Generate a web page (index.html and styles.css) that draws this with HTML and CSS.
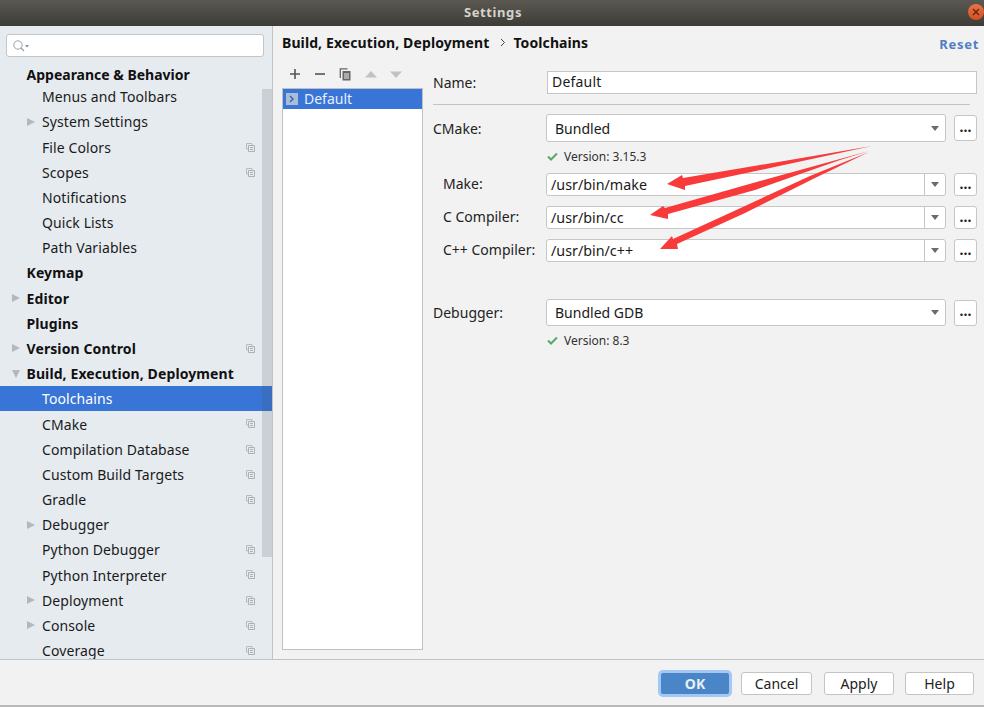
FILE: index.html
```html
<!DOCTYPE html>
<html lang="en">
<head>
    <meta charset="UTF-8">
    <title>Settings</title>
    <link rel="stylesheet" href="styles.css">
</head>
<body>
    <svg class="defs" width="0" height="0">
        <symbol id="i-copy" viewBox="0 0 9 9">
            <path d="M.5.5h5.5v1.5M.5.5v5.5h2" fill="none" stroke="#b4bcc2"/>
            <path d="M2.5 2.5h6v6h-6zM4 4.5h3M4 6.5h3" fill="none" stroke="#a8b2b9"/>
        </symbol>
    </svg>

    <div class="window">
        <header class="titlebar">
            <span class="title">Settings</span>
            <span class="close">
                <svg width="8" height="8" viewBox="0 0 8 8"><path d="M1 1l6 6M7 1l-6 6" stroke="#5a2410" stroke-width="1.2"/></svg>
            </span>
        </header>

        <div class="main">
            <aside class="sidebar">
                <div class="search">
                    <svg width="18" height="14" viewBox="0 0 18 14">
                        <circle cx="6" cy="6" r="4.2" fill="none" stroke="#9aa0a4"/>
                        <path d="M9 9l3 3" stroke="#9aa0a4" stroke-width="1.2"/>
                        <path d="M13 6h4l-2 2.5z" fill="#8a8f93"/>
                    </svg>
                </div>
                <ul class="tree">
                    <li class="row top first">Appearance &amp; Behavior</li>
                    <li class="row sub">Menus and Toolbars</li>
                    <li class="row sub arrow">System Settings</li>
                    <li class="row sub">File Colors<svg class="copy"><use href="#i-copy"/></svg></li>
                    <li class="row sub">Scopes<svg class="copy"><use href="#i-copy"/></svg></li>
                    <li class="row sub">Notifications</li>
                    <li class="row sub">Quick Lists</li>
                    <li class="row sub">Path Variables</li>
                    <li class="row top">Keymap</li>
                    <li class="row top arrow">Editor</li>
                    <li class="row top">Plugins</li>
                    <li class="row top arrow">Version Control<svg class="copy"><use href="#i-copy"/></svg></li>
                    <li class="row top arrow open">Build, Execution, Deployment</li>
                    <li class="row sub selected">Toolchains</li>
                    <li class="row sub">CMake<svg class="copy"><use href="#i-copy"/></svg></li>
                    <li class="row sub">Compilation Database<svg class="copy"><use href="#i-copy"/></svg></li>
                    <li class="row sub">Custom Build Targets<svg class="copy"><use href="#i-copy"/></svg></li>
                    <li class="row sub">Gradle<svg class="copy"><use href="#i-copy"/></svg></li>
                    <li class="row sub arrow">Debugger</li>
                    <li class="row sub">Python Debugger<svg class="copy"><use href="#i-copy"/></svg></li>
                    <li class="row sub">Python Interpreter<svg class="copy"><use href="#i-copy"/></svg></li>
                    <li class="row sub arrow">Deployment<svg class="copy"><use href="#i-copy"/></svg></li>
                    <li class="row sub arrow">Console<svg class="copy"><use href="#i-copy"/></svg></li>
                    <li class="row sub">Coverage<svg class="copy"><use href="#i-copy"/></svg></li>
                </ul>
                <div class="scrollbar"></div>
            </aside>

            <section class="content">
                <div class="crumbs">
                    <b>Build, Execution, Deployment</b>
                    <svg class="crumb-sep" width="6" height="9" viewBox="0 0 6 9"><path d="M1 1l3.5 3.5L1 8" fill="none" stroke="#444"/></svg>
                    <b>Toolchains</b>
                    <a class="reset">Reset</a>
                </div>

                <div class="panes">
                    <div class="list-pane">
                        <div class="toolbar">
                            <svg width="12" height="12" viewBox="0 0 12 12"><path d="M6 1v10M1 6h10" stroke="#555" stroke-width="1.6"/></svg>
                            <svg width="12" height="12" viewBox="0 0 12 12"><path d="M1 6h10" stroke="#555" stroke-width="1.6"/></svg>
                            <svg width="13" height="13" viewBox="0 0 12 13">
                                <path d="M.8 10V.8H8" fill="none" stroke="#666" stroke-width="1.3"/>
                                <path d="M3 3h8v9.5H3z" fill="#666"/>
                                <path d="M4.5 6h5M4.5 8h5M4.5 10h5" stroke="#f2f2f2"/>
                            </svg>
                            <svg width="12" height="7" viewBox="0 0 12 7"><path d="M6 0l6 6.5H0z" fill="#c2c2c2"/></svg>
                            <svg width="12" height="7" viewBox="0 0 12 7"><path d="M0 .5h12L6 7z" fill="#c2c2c2"/></svg>
                        </div>
                        <div class="list">
                            <div class="list-item">
                                <span class="tc-icon">
                                    <svg width="12" height="12" viewBox="0 0 12 12"><path d="M4 3l3 3-3 3" fill="none" stroke="#3d6ba8" stroke-width="1.5"/></svg>
                                </span>
                                Default
                            </div>
                        </div>
                    </div>

                    <div class="form">
                        <div class="field name-field">
                            <label>Name:</label>
                            <div class="input">Default</div>
                        </div>
                        <hr class="divider">

                        <div class="field tall">
                            <label>CMake:</label>
                            <div class="combo big"><span>Bundled</span><i class="caret"></i></div>
                            <button class="dots">...</button>
                        </div>
                        <div class="version"><svg width="11" height="9" viewBox="0 0 11 9"><path d="M1 4.5l3 3 6-6" fill="none" stroke="#59a869" stroke-width="2"/></svg>Version: 3.15.3</div>

                        <div class="field tool first-tool">
                            <label class="inset">Make:</label>
                            <div class="combo split"><span>/usr/bin/make</span><i class="caret"></i></div>
                            <button class="dots">...</button>
                        </div>
                        <div class="field tool">
                            <label class="inset">C Compiler:</label>
                            <div class="combo split"><span>/usr/bin/cc</span><i class="caret"></i></div>
                            <button class="dots">...</button>
                        </div>
                        <div class="field tool">
                            <label class="inset">C++ Compiler:</label>
                            <div class="combo split"><span>/usr/bin/c++</span><i class="caret"></i></div>
                            <button class="dots">...</button>
                        </div>

                        <div class="field tall debugger">
                            <label>Debugger:</label>
                            <div class="combo big"><span>Bundled GDB</span><i class="caret"></i></div>
                            <button class="dots">...</button>
                        </div>
                        <div class="version"><svg width="11" height="9" viewBox="0 0 11 9"><path d="M1 4.5l3 3 6-6" fill="none" stroke="#59a869" stroke-width="2"/></svg>Version: 8.3</div>
                    </div>
                </div>
            </section>
        </div>

        <footer class="footer">
            <button class="btn ok">OK</button>
            <button class="btn cancel">Cancel</button>
            <button class="btn apply">Apply</button>
            <button class="btn help">Help</button>
        </footer>
    </div>

    <!-- red arrows drawn on top of the screenshot -->
    <svg class="arrows" width="984" height="708" viewBox="0 0 984 708">
        <path d="M872 146 L760 165 L683 178 L682 175 L667 184 L685 190 L685 186 L770 168 Z" fill="#f93a3a"/>
        <path d="M869 151 L760 181 L665 208 L663 206 L650 215 L668 219 L668 214 L755 190 L840 160 Z" fill="#f93a3a"/>
        <path d="M869 152 L810 176 L673 239 L672 236 L660 249 L678 249 L677 244 L745 213 L815 178 Z" fill="#f93a3a"/>
    </svg>
</body>
</html>
```

FILE: styles.css
```css
* {
    box-sizing: border-box;
}
html, body {
    margin: 0;
    height: 100%;
    overflow: hidden;
    background: #fff;
}
body {
    font-family: "Noto Sans", "Open Sans", sans-serif;
    font-size: 14px;
    color: #1a1a1a;
}
.defs {
    position: absolute;
}
.window {
    width: 984px;
    height: 707px;
    display: flex;
    flex-direction: column;
    background: #f2f2f2;
    border-bottom: 2px solid #b8b8b8;
}

/* title bar */
.titlebar {
    height: 26px;
    flex: none;
    display: flex;
    align-items: center;
    justify-content: center;
    position: relative;
    padding: 0 0 2px 2px;
    background: linear-gradient(#5a5851, #3e3c37);
}
.title {
    color: #d6d3cc;
    font-size: 13px;
    font-weight: 700;
    letter-spacing: 0.6px;
}
.close {
    position: absolute;
    right: 0;
    top: 4px;
    width: 16px;
    height: 16px;
    border-radius: 50%;
    background: linear-gradient(#ed7446, #d24f20);
    display: flex;
    align-items: center;
    justify-content: center;
}

.main {
    flex: 1;
    display: flex;
    min-height: 0;
}

/* left tree */
.sidebar {
    width: 273px;
    flex: none;
    position: relative;
    overflow: hidden;
    background: #e6ebf0;
    border-right: 1px solid #c4c4c4;
    padding-top: 8px;
}
.search {
    height: 23px;
    margin: 0 8px 0 6px;
    background: #fff;
    border: 1px solid #c3c6c9;
    border-radius: 3px;
    display: flex;
    align-items: center;
    padding-left: 5px;
}
.tree {
    list-style: none;
    margin: 7px 0 0;
    padding: 0;
}
.row {
    height: 25.18px;
    display: flex;
    align-items: center;
    position: relative;
    white-space: nowrap;
    letter-spacing: 0.1px;
}
.row.first {
    height: 20.2px;
    letter-spacing: 0;
}
.top {
    padding-left: 26.5px;
    font-weight: 700;
    color: #111;
}
.sub {
    padding-left: 42px;
}
.selected {
    background: #3875d7;
    color: #fff;
}
.arrow::before {
    content: "";
    position: absolute;
    border-style: solid;
    border-width: 4.5px 0 4.5px 8px;
    border-color: transparent transparent transparent #b5b8bb;
}
.top.arrow::before {
    left: 12px;
}
.sub.arrow::before {
    left: 27px;
}
.top.arrow.open::before {
    left: 12px;
    border-width: 8px 4.5px 0 4.5px;
    border-color: #b5b8bb transparent transparent transparent;
}
.copy {
    position: absolute;
    left: 246px;
    top: 8px;
    width: 9px;
    height: 9px;
}
.scrollbar {
    position: absolute;
    left: 262px;
    top: 63px;
    width: 10px;
    height: 468px;
    background: rgba(70, 80, 90, 0.17);
}

/* right side */
.content {
    flex: 1;
    min-width: 0;
    padding: 0 7px 9px 9px;
    display: flex;
    flex-direction: column;
}
.crumbs {
    height: 34px;
    flex: none;
    display: flex;
    align-items: center;
    padding-bottom: 1px;
    font-size: 14px;
    letter-spacing: 0.1px;
    color: #111;
}
.crumbs b {
    font-weight: 700;
}
.crumb-sep {
    margin: 0 7px 0 11px;
}
.reset {
    margin-left: auto;
    margin-right: -2px;
    padding-top: 2px;
    font-weight: 700;
    font-size: 13px;
    color: #4f7fc4;
    letter-spacing: 0.7px;
}
.panes {
    flex: 1;
    display: flex;
    min-height: 0;
    gap: 10px;
}
.list-pane {
    width: 141px;
    flex: none;
    display: flex;
    flex-direction: column;
}
.toolbar {
    height: 28px;
    flex: none;
    display: flex;
    align-items: center;
    gap: 13px;
    padding-left: 7px;
}
.list {
    flex: 1;
    background: #fff;
    border: 1px solid #c0c0c0;
}
.list-item {
    height: 20px;
    background: #3875d7;
    color: #e8eefa;
    display: flex;
    align-items: center;
    gap: 6px;
    padding: 0 0 1px 3px;
}
.tc-icon {
    width: 12px;
    height: 12px;
    background: #a9bcd8;
    display: flex;
}

/* form */
.form {
    flex: 1;
    min-width: 0;
    padding-top: 11px;
}
.field {
    display: flex;
    align-items: center;
    height: 23px;
}
.field label {
    width: 113px;
    flex: none;
    color: #222;
}
.field label.inset {
    padding: 0 0 2px 10px;
}
.input {
    flex: 1;
    height: 23px;
    margin-left: 1px;
    background: #fff;
    border: 1px solid #c6c6c6;
    padding-left: 4px;
    line-height: 20px;
    letter-spacing: 0.2px;
}
.divider {
    height: 1px;
    border: none;
    background: #c4c4c4;
    margin: 10px 7px 9px 0;
}
.tall {
    height: 28px;
}
.debugger {
    height: 27px;
    margin-top: 37px;
}
.combo {
    width: 400px;
    background: #fff;
    border: 1px solid #c6c6c6;
    border-radius: 3px;
    display: flex;
    align-items: center;
    justify-content: space-between;
    position: relative;
}
.combo.big {
    height: 100%;
    padding-left: 8px;
    font-size: 14px;
}
.combo.split {
    height: 23px;
    padding: 0 0 1px 4px;
    font-size: 14.3px;
}
.combo.split::after {
    content: "";
    position: absolute;
    right: 20px;
    top: 0;
    bottom: 0;
    width: 1px;
    background: #c6c6c6;
}
.caret {
    border-style: solid;
    border-width: 5px 4px 0 4px;
    border-color: #6b6b6b transparent transparent transparent;
    margin-right: 6px;
}
.dots {
    width: 23px;
    height: 26px;
    margin-left: 8px;
    padding: 0 0 4px;
    background: #fff;
    border: 1px solid #c6c6c6;
    border-radius: 3px;
    font: inherit;
    font-weight: 700;
    color: #222;
}
.tool .dots {
    height: 23px;
}
.version {
    display: flex;
    align-items: center;
    gap: 6px;
    height: 28px;
    margin-left: 112px;
    font-size: 12px;
    color: #333;
    padding-left: 2px;
}
.first-tool {
    margin-top: 3px;
}
.tool + .tool {
    margin-top: 10px;
}

/* bottom buttons */
.footer {
    height: 46px;
    flex: none;
    border-top: 1px solid #c2c2c2;
    display: flex;
    align-items: center;
    padding: 1px 10px 0 0;
    justify-content: flex-end;
}
.btn {
    height: 23px;
    background: #fff;
    border: 1px solid #c4c4c4;
    border-radius: 3px;
    font: inherit;
    color: #222;
    padding: 0;
}
.cancel {
    width: 71px;
    margin-left: 9px;
}
.apply {
    width: 70px;
    margin-left: 12px;
}
.help {
    width: 69px;
    margin-left: 11px;
}
.ok {
    width: 74px;
    height: 27px;
    background: #4a86c7;
    border: 3px solid #a3c8f5;
    border-radius: 5px;
    color: #e8eef5;
    font-weight: 700;
}
.arrows {
    position: absolute;
    left: 0;
    top: 0;
    pointer-events: none;
}
```
